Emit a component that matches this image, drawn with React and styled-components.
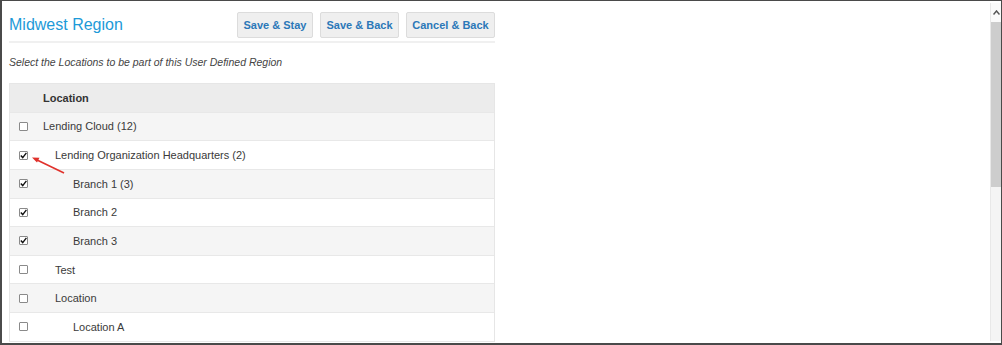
import React from 'react';
import styled, { createGlobalStyle } from 'styled-components';

const GlobalStyle = createGlobalStyle`
  body {
    margin: 0;
    font-family: "Liberation Sans", Arial, sans-serif;
    background: #fff;
  }
`;

const Frame = styled.div`
  width: 1002px;
  height: 345px;
  box-sizing: border-box;
  border: 2px solid #4a4a4a;
  border-top-width: 1px;
  border-right-width: 1px;
  display: flex;
  overflow: hidden;
  background: #fff;
`;

const Main = styled.div`
  flex: 1;
  padding: 11px 0 0 7px;
  position: relative;
`;

const Panel = styled.div`
  width: 486px;
`;

const Header = styled.div`
  display: flex;
  align-items: center;
  justify-content: space-between;
  padding-bottom: 3px;
  border-bottom: 2px solid #f0f0f0;
`;

const Title = styled.h1`
  margin: 0;
  font-size: 16px;
  font-weight: normal;
  color: #1d9ad8;
`;

const Buttons = styled.div`
  display: flex;
  gap: 7px;
`;

const Button = styled.button`
  height: 26px;
  width: ${p => p.w}px;
  padding: 0;
  background: #efefef;
  border: 1px solid #dcdcdc;
  border-radius: 2px;
  color: #2b78b8;
  font-family: "Liberation Sans", Arial, sans-serif;
  font-weight: bold;
  font-size: 11px;
`;

const Hint = styled.p`
  margin: 13px 0 15px;
  font-size: 10.5px;
  font-style: italic;
  color: #444;
`;

const Table = styled.div`
  border: 1px solid #e6e6e6;
  border-bottom: none;
`;

const Row = styled.div`
  display: flex;
  align-items: center;
  height: 28.625px;
  box-sizing: border-box;
  border-bottom: 1px solid #e8e8e8;
  background: ${p => (p.head ? '#ececec' : p.odd ? '#f5f5f5' : '#fff')};
  font-size: 11px;
  font-weight: ${p => (p.head ? 'bold' : 'normal')};
  color: ${p => (p.head ? '#333' : '#3a3a3a')};
`;

const CheckCell = styled.div`
  width: 33px;
  padding-left: 9px;
  box-sizing: border-box;
  display: flex;
  align-items: center;
`;

const Box = styled.span`
  width: 9px;
  height: 9px;
  box-sizing: border-box;
  border: 1px solid #8a8a8a;
  border-radius: 1px;
  background: #fff;
  display: flex;
  align-items: center;
  justify-content: center;
`;

const Label = styled.div`
  padding-left: ${p => p.level * 12 + (p.level > 1 ? 6 : 0)}px;
`;

const Arrow = styled.svg`
  position: absolute;
  left: 0;
  top: 0;
  pointer-events: none;
`;

const Scrollbar = styled.div`
  width: 10px;
  margin: 2px 0 2px;
  background: #f4f4f4;
  border-left: 1px solid #e8e8e8;
  display: flex;
  flex-direction: column;
`;

const ScrollArrow = styled.div`
  height: 19px;
  display: flex;
  align-items: center;
  justify-content: center;
  background: #fafafa;
`;

const Thumb = styled.div`
  height: 165px;
  background: #cdcdcd;
`;

const rows = [
  { name: 'Lending Cloud (12)', level: 0, checked: false },
  { name: 'Lending Organization Headquarters (2)', level: 1, checked: true },
  { name: 'Branch 1 (3)', level: 2, checked: true },
  { name: 'Branch 2', level: 2, checked: true },
  { name: 'Branch 3', level: 2, checked: true },
  { name: 'Test', level: 1, checked: false },
  { name: 'Location', level: 1, checked: false },
  { name: 'Location A', level: 2, checked: false },
];

const Check = () => (
  <svg width="7" height="7" viewBox="0 0 7 7">
    <path d="M0.8 3.6 L2.7 5.6 L6.4 0.9" fill="none" stroke="#111" strokeWidth="1.4" />
  </svg>
);

export default function App() {
  return (
    <>
      <GlobalStyle />
      <Frame>
        <Main>
          <Panel>
            <Header>
              <Title>Midwest Region</Title>
              <Buttons>
                <Button w={76}>Save &amp; Stay</Button>
                <Button w={79}>Save &amp; Back</Button>
                <Button w={89}>Cancel &amp; Back</Button>
              </Buttons>
            </Header>
            <Hint>Select the Locations to be part of this User Defined Region</Hint>
            <Table>
              <Row head>
                <CheckCell />
                <Label level={0}>Location</Label>
              </Row>
              {rows.map((r, i) => (
                <Row key={i} odd={i % 2 === 0}>
                  <CheckCell>
                    <Box>{r.checked && <Check />}</Box>
                  </CheckCell>
                  <Label level={r.level}>{r.name}</Label>
                </Row>
              ))}
            </Table>
          </Panel>
          <Arrow width="80" height="190">
            <line x1="62" y1="172" x2="33" y2="158" stroke="#e0312b" strokeWidth="1.6" />
            <path d="M30 156.5 L37.5 156.8 L35 161.5 Z" fill="#e0312b" />
          </Arrow>
        </Main>
        <Scrollbar>
          <ScrollArrow>
            <svg width="7" height="5" viewBox="0 0 7 5">
              <path d="M0.5 4.5 L3.5 1 L6.5 4.5" fill="none" stroke="#555" strokeWidth="1.5" />
            </svg>
          </ScrollArrow>
          <Thumb />
        </Scrollbar>
      </Frame>
    </>
  );
}
